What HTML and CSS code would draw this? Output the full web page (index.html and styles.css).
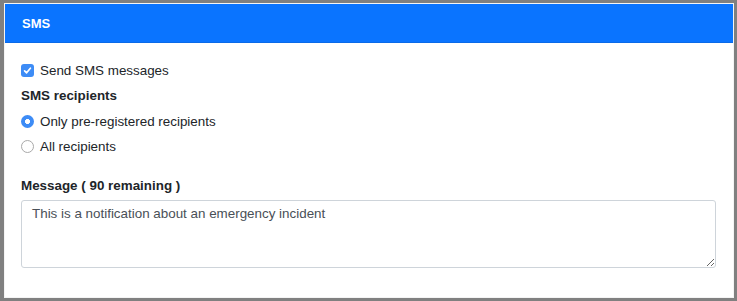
FILE: index.html
```html
<!DOCTYPE html>
<html lang="en">
<head>
    <meta charset="UTF-8">
    <meta name="viewport" content="width=device-width, initial-scale=1.0">
    <title>SMS</title>
    <link rel="stylesheet" href="styles.css">
</head>
<body>
    <div class="frame">
        <div class="card">
            <div class="card-header">SMS</div>
            <div class="card-body">
                <label class="check-row">
                    <input type="checkbox" class="check" checked>
                    <span>Send SMS messages</span>
                </label>
                <div class="group-label">SMS recipients</div>
                <label class="radio-row">
                    <input type="radio" name="recipients" class="radio" checked>
                    <span>Only pre-registered recipients</span>
                </label>
                <label class="radio-row">
                    <input type="radio" name="recipients" class="radio">
                    <span>All recipients</span>
                </label>
                <div class="group-label message-label">Message ( 90 remaining )</div>
                <textarea class="message">This is a notification about an emergency incident</textarea>
            </div>
        </div>
    </div>
</body>
</html>
```

FILE: styles.css
```css
html, body {
    margin: 0;
    height: 100%;
}
body {
    background-color: #808080;
    font-family: 'Liberation Sans', Arial, sans-serif;
    font-size: 13.4px;
    color: #212529;
}
.frame {
    padding: 3px 3px 3px 4px;
    height: 100%;
    box-sizing: border-box;
}
.card {
    height: 100%;
    box-sizing: border-box;
    background-color: #fff;
    border: 1px solid #f4f4f4;
    display: flex;
    flex-direction: column;
}
.card-header {
    background-color: #0a74ff;
    color: #fff;
    font-weight: bold;
    font-size: 13px;
    height: 39px;
    line-height: 39px;
    padding-left: 17px;
    border-bottom: 1px solid #0a6ae8;
    box-sizing: border-box;
}
.card-body {
    padding: 17px 17px 0 16px;
    display: flex;
    flex-direction: column;
}
.check-row, .radio-row {
    display: flex;
    align-items: center;
    height: 20px;
}
.check-row {
    margin-bottom: 6px;
}
.radio-row {
    margin-top: 5px;
}
.check-row span, .radio-row span {
    margin-left: 6px;
}
.check, .radio {
    appearance: none;
    -webkit-appearance: none;
    margin: 0;
    width: 13px;
    height: 13px;
    flex: none;
    box-sizing: border-box;
}
.check {
    border-radius: 3px;
    background-color: #3d8cf6;
    background-image: url("data:image/svg+xml;utf8,<svg xmlns='http://www.w3.org/2000/svg' viewBox='0 0 13 13'><path d='M3.6 6.8 L5.6 8.8 L9.4 4.2' fill='none' stroke='white' stroke-width='1.7' stroke-linecap='round' stroke-linejoin='round'/></svg>");
}
.radio {
    border-radius: 50%;
    border: 1px solid #a9a9a9;
    background-color: #fff;
}
.radio:checked {
    border: none;
    background-color: #3d8cf6;
    background-image: radial-gradient(circle, #fff 0, #fff 2.2px, transparent 2.8px);
}
.group-label {
    font-weight: bold;
    height: 20px;
    line-height: 20px;
}
.message-label {
    margin-top: 20px;
    margin-bottom: 4px;
}
.message {
    width: 100%;
    height: 68px;
    box-sizing: border-box;
    border: 1px solid #ced4da;
    border-radius: 3px;
    padding: 4px 10px;
    font-family: 'Liberation Sans', Arial, sans-serif;
    font-size: 13.4px;
    line-height: 18px;
    color: #495057;
}
```
